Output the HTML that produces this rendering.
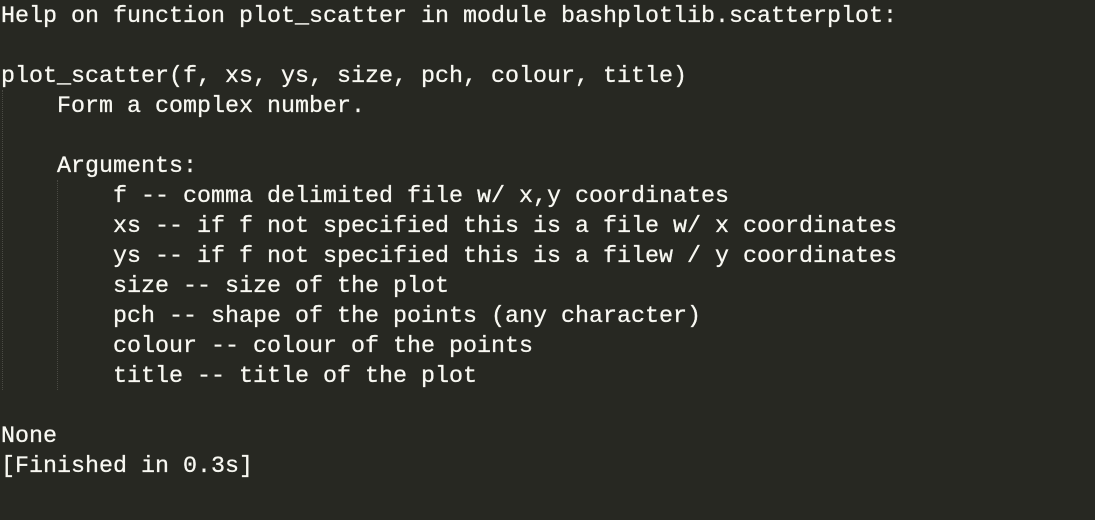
<!DOCTYPE html>
<html><head><style>
html,body{margin:0;padding:0;background:#272822;width:1095px;height:520px;overflow:hidden}
pre{margin:0;padding:0 0 0 1px;font-family:"Liberation Mono",monospace;font-size:23.33px;line-height:30px;color:#f8f8f2;position:relative;top:2px;-webkit-text-stroke:0.3px #f8f8f2}
.g{position:absolute;width:0;border-left:1px dotted #4a4a44}
</style></head><body>
<div class="g" style="left:2px;top:90px;height:300px"></div>
<div class="g" style="left:57px;top:180px;height:210px"></div>
<pre>Help on function plot_scatter in module bashplotlib.scatterplot:

plot_scatter(f, xs, ys, size, pch, colour, title)
    Form a complex number.

    Arguments:
        f -- comma delimited file w/ x,y coordinates
        xs -- if f not specified this is a file w/ x coordinates
        ys -- if f not specified this is a filew / y coordinates
        size -- size of the plot
        pch -- shape of the points (any character)
        colour -- colour of the points
        title -- title of the plot

None
[Finished in 0.3s]</pre>
</body></html>
